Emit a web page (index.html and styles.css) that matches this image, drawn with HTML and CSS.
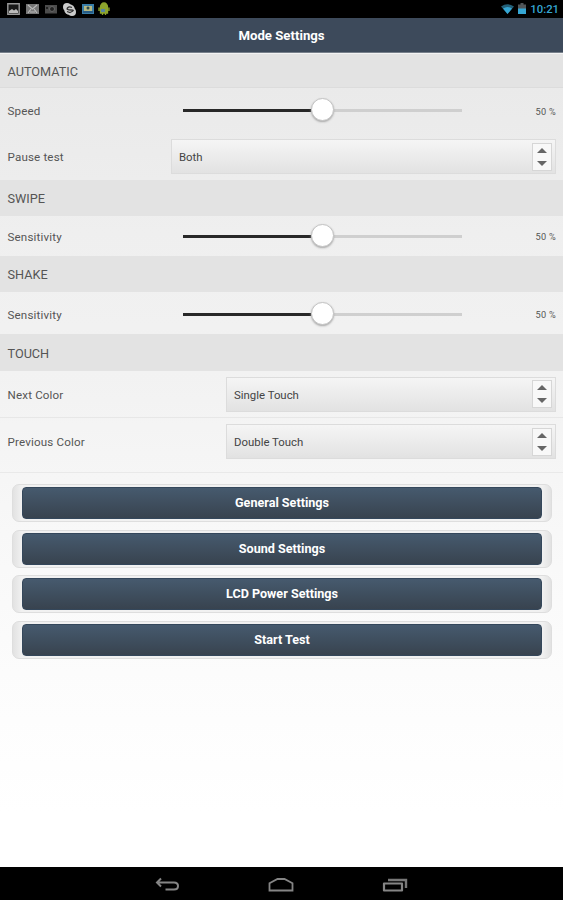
FILE: index.html
```
<!DOCTYPE html>
<html lang="en">
<head>
<meta charset="utf-8">
<title>Mode Settings</title>
<link rel="stylesheet" href="styles.css">
</head>
<body>
<div class="status">
  <div class="notifications">
    <svg width="13" height="12" viewBox="0 0 13 12"><path d="M.8 .8h11.400v10.400H.8z" fill="#181818" stroke="#999" stroke-width="1.400"/><path d="M2 10V8l3-2 2 1.500L9 6l2 2v2z" fill="#bbb"/></svg>
    <svg width="13" height="12" viewBox="0 0 13 12"><path d="M0 1h13v10H0z" fill="#777"/><path d="M2 2l4.500 4L11 2M2 10l3-4M11 10L8 6M4 9h5" fill="none" stroke="#bbb" stroke-width="1.200"/></svg>
    <svg width="12" height="12" viewBox="0 0 12 12"><path d="M0 2h12v8.500H0z" fill="#4c4c4c"/><circle cx="7" cy="6" r="2.500" fill="#222" stroke="#666"/><path d="M1 4h2v2H1z" fill="#222"/></svg>
    <svg width="13" height="13" viewBox="0 0 13 13"><circle cx="4" cy="4" r="4" fill="#ccc"/><circle cx="9" cy="9" r="4" fill="#ccc"/><circle cx="6.500" cy="6.500" r="5.300" fill="#ccc"/><path d="M9 4.500Q6 3 4.500 5T8 7T7 9.500L4 8.500" fill="none" stroke="#333" stroke-width="1.300"/></svg>
    <svg width="12" height="12" viewBox="0 0 12 12"><path d="M0 1h12v10H0z" fill="#397da8"/><path d="M2 3h8v5H2z" fill="#b4b783"/><path d="M1 8h10v2H1z" fill="#275b84"/><circle cx="6" cy="5" r="1.500" fill="#2e4b50"/></svg>
    <svg class="robot" width="12" height="14" viewBox="0 0 12 14"><path d="M2.500 5a3.500 4 0 0 1 7 0M2.500 5.500h7V11h-7zM1 5.500V9M11 5.500V9M4.500 11v2M7.500 11v2" fill="#8da52d" stroke="#8da52d" stroke-width="1.300"/><path d="M3 7h4v3H3z" fill="#5584a0"/></svg>
  </div>
  <div class="system">
    <svg width="13" height="11" viewBox="0 0 13 11"><path d="M0 2.500Q6.500-2 13 2.500L6.500 10z" fill="#246078"/><path d="M2 4.500Q6.500 1.500 11 4.500L6.500 10z" fill="#35a6d3"/></svg>
    <svg width="8" height="12" viewBox="0 0 8 12"><path d="M2.500 0h3v1.500H8V6H0V1.500h2.500z" fill="#505558"/><path d="M0 5.500h8V11H0z" fill="#35a6d3"/></svg>
    <span>10:21</span>
  </div>
</div>
<header class="title">Mode Settings</header>
<main>
  <h2 class="section first">AUTOMATIC</h2>
  <div class="row speed"><span class="label">Speed</span><div class="slider"><i class="thumb"></i></div><span class="percent">50 %</span></div>
  <div class="row pause"><span class="label">Pause test</span><div class="select wide"><span>Both</span><i class="spin"></i></div></div>
  <h2 class="section">SWIPE</h2>
  <div class="row swipe"><span class="label">Sensitivity</span><div class="slider"><i class="thumb"></i></div><span class="percent">50 %</span></div>
  <h2 class="section">SHAKE</h2>
  <div class="row shake"><span class="label">Sensitivity</span><div class="slider"><i class="thumb"></i></div><span class="percent">50 %</span></div>
  <h2 class="section touch">TOUCH</h2>
  <div class="row next"><span class="label">Next Color</span><div class="select"><span>Single Touch</span><i class="spin"></i></div></div>
  <div class="row previous"><span class="label">Previous Color</span><div class="select"><span>Double Touch</span><i class="spin"></i></div></div>
  <div class="actions">
    <div class="frame"><div class="button">General Settings</div></div>
    <div class="frame"><div class="button">Sound Settings</div></div>
    <div class="frame"><div class="button">LCD Power Settings</div></div>
    <div class="frame"><div class="button">Start Test</div></div>
  </div>
</main>
<nav class="nav">
  <svg width="25" height="16" viewBox="0 0 25 16"><path d="M6 1.500L2 5.500l4 4M2.500 5.500H19q4 0 4 3.500t-4 3.500h-8.500" fill="none" stroke="#858585" stroke-width="2"/></svg>
  <svg width="26" height="16" viewBox="0 0 26 16"><path d="M1.500 13.500V6.200L9.500 2h7l8 4.200v7.300z" fill="none" stroke="#858585" stroke-width="1.800"/></svg>
  <svg width="26" height="16" viewBox="0 0 26 16"><path d="M2 6.500h18v7H2z" fill="none" stroke="#858585" stroke-width="2.200" stroke-linejoin="round"/><path d="M6 3h18V11" fill="none" stroke="#777" stroke-width="2.400"/></svg>
</nav>
</body>
</html>
```

FILE: styles.css
```
* { box-sizing: border-box; }
body {
  margin: 0;
  height: 900px;
  display: flex;
  flex-direction: column;
  overflow: hidden;
  background: #fff;
  color: #555;
  font: 11.4px Roboto, sans-serif;
}
svg { display: block; }
.status {
  height: 18px;
  background: #000;
  display: flex;
  justify-content: space-between;
  align-items: center;
  padding: 0 4px 0 7px;
}
.notifications { display: flex; gap: 6px; align-items: center; }
.robot { margin-left: -2px; }
.system {
  display: flex;
  gap: 4px;
  align-items: center;
  color: #35a6d3;
  font-size: 11.3px;
  font-weight: 500;
}
.title {
  height: 35px;
  background: #3d4a5b;
  border-bottom: 1px solid #77808b;
  color: #fff;
  font-size: 13.2px;
  font-weight: 700;
  line-height: 36px;
  text-align: center;
}
main {
  flex: 1;
  background: linear-gradient(#e9e9e9 0, #ececec 100px, #efefef 180px, #f2f2f2 320px, #f8f8f8 480px, #fcfcfc 620px, #fff 760px);
}
.section {
  height: 36px;
  margin: 0;
  padding-left: 7.5px;
  background: #e3e3e3;
  font-size: 12.7px;
  font-weight: 400;
  line-height: 38px;
}
.section.first { height: 35px; border-top: 1px solid #f3f3f3; border-bottom: 1px solid #dcdcdc; line-height: 36px; }
.section.touch { height: 37px; line-height: 39px; }
.row { display: flex; align-items: center; padding: 0 7px 0 7.5px; }
.label { flex: 1; font-size: 11.6px; letter-spacing: .16px; padding-top: 1px; }
.speed { height: 45px; }
.pause { height: 47px; }
.swipe { height: 40px; }
.shake { height: 42px; padding-top: 2px; }
.next { height: 47px; border-bottom: 1px solid #e7e7e7; }
.previous { height: 55px; border-bottom: 1px solid #e9e9e9; padding-bottom: 7px; }
.slider {
  width: 279px;
  height: 3px;
  background: linear-gradient(90deg, #282828 50%, #cfcfcf 50%);
  display: flex;
  align-items: center;
  justify-content: center;
}
.thumb {
  width: 23px;
  height: 23px;
  margin: 0 0 2px;
  flex: none;
  border: 1px solid #c4c4c4;
  border-radius: 50%;
  background: #fff;
  box-shadow: 0 1px 2px #aaa;
}
.percent { width: 94px; padding-top: 1px; text-align: right; font-size: 9.2px; letter-spacing: .3px; }
.select {
  width: 330px;
  height: 35px;
  padding: 0 3px 0 7px;
  display: flex;
  align-items: center;
  justify-content: space-between;
  background: linear-gradient(#f5f5f5, #e2e2e2);
  border: 1px solid #dcdcdc;
  color: #444;
}
.select > span { padding-top: 1px; }
.select.wide { width: 385px; }
.spin {
  width: 20px;
  height: 28px;
  display: flex;
  flex-direction: column;
  align-items: center;
  justify-content: center;
  gap: 8px;
  border: 1px solid #d6d6d6;
  background: #f8f8f8;
}
.spin::before, .spin::after { content: ""; border: 5px solid transparent; border-top: 0; border-bottom-color: #666; }
.spin::after { border-bottom: 0; border-top: 5px solid #666; }
.actions { padding: 11px 11px 0 12px; display: grid; gap: 7.7px; }
.frame {
  height: 38px;
  padding: 2px 9px 4px;
  border: 1px solid #dedede;
  border-radius: 7px;
  background: linear-gradient(90deg, #e2e2e2, #f1f1f1 9px calc(100% - 9px), #e2e2e2);
}
.button {
  height: 32px;
  border: 1px solid #34475b;
  border-radius: 4px;
  background: linear-gradient(#465a6e, #38434f);
  color: #fff;
  font-size: 12.6px;
  font-weight: 700;
  line-height: 30px;
  text-align: center;
}
.nav {
  height: 33px;
  background: #000;
  display: flex;
  justify-content: center;
  align-items: center;
  gap: 88px;
  padding: 2px 0 0;
}
```
